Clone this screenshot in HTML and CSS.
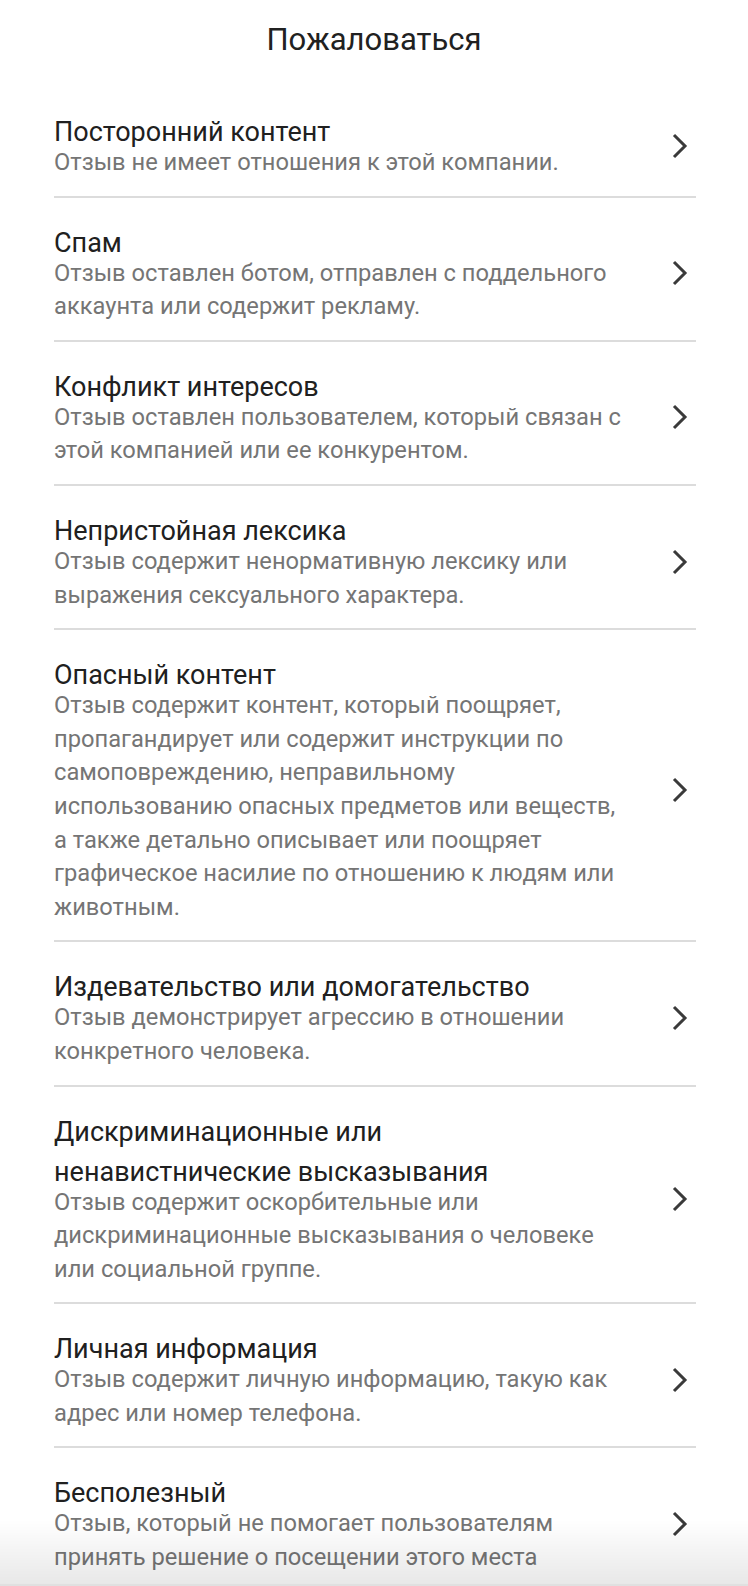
FILE: index.html
```html
<!DOCTYPE html>
<html lang="ru">
<head>
  <meta charset="UTF-8">
  <title>Пожаловаться</title>
  <link rel="stylesheet" href="styles.css">
</head>
<body>
  <div class="header">Пожаловаться</div>

  <div class="report-list">
    <div class="report-item">
      <div class="report-text">
        <div class="report-title">Посторонний контент</div>
        <div class="report-desc">Отзыв не имеет отношения к этой компании.</div>
      </div>
      <svg class="chevron" viewBox="0 0 16 26"><path d="M2 2 L13 13 L2 24"/></svg>
    </div>

    <div class="report-item">
      <div class="report-text">
        <div class="report-title">Спам</div>
        <div class="report-desc">Отзыв оставлен ботом, отправлен с поддельного аккаунта или содержит рекламу.</div>
      </div>
      <svg class="chevron" viewBox="0 0 16 26"><path d="M2 2 L13 13 L2 24"/></svg>
    </div>

    <div class="report-item">
      <div class="report-text">
        <div class="report-title">Конфликт интересов</div>
        <div class="report-desc">Отзыв оставлен пользователем, который связан с этой компанией или ее конкурентом.</div>
      </div>
      <svg class="chevron" viewBox="0 0 16 26"><path d="M2 2 L13 13 L2 24"/></svg>
    </div>

    <div class="report-item">
      <div class="report-text">
        <div class="report-title">Непристойная лексика</div>
        <div class="report-desc">Отзыв содержит ненормативную лексику или выражения сексуального характера.</div>
      </div>
      <svg class="chevron" viewBox="0 0 16 26"><path d="M2 2 L13 13 L2 24"/></svg>
    </div>

    <div class="report-item">
      <div class="report-text">
        <div class="report-title">Опасный контент</div>
        <div class="report-desc">Отзыв содержит контент, который поощряет, пропагандирует или содержит инструкции по самоповреждению, неправильному использованию опасных предметов или веществ, а также детально описывает или поощряет графическое насилие по отношению к людям или животным.</div>
      </div>
      <svg class="chevron" viewBox="0 0 16 26"><path d="M2 2 L13 13 L2 24"/></svg>
    </div>

    <div class="report-item">
      <div class="report-text">
        <div class="report-title">Издевательство или домогательство</div>
        <div class="report-desc">Отзыв демонстрирует агрессию в отношении конкретного человека.</div>
      </div>
      <svg class="chevron" viewBox="0 0 16 26"><path d="M2 2 L13 13 L2 24"/></svg>
    </div>

    <div class="report-item">
      <div class="report-text">
        <div class="report-title">Дискриминационные или ненавистнические высказывания</div>
        <div class="report-desc">Отзыв содержит оскорбительные или дискриминационные высказывания о человеке или социальной группе.</div>
      </div>
      <svg class="chevron" viewBox="0 0 16 26"><path d="M2 2 L13 13 L2 24"/></svg>
    </div>

    <div class="report-item">
      <div class="report-text">
        <div class="report-title">Личная информация</div>
        <div class="report-desc">Отзыв содержит личную информацию, такую как адрес или номер телефона.</div>
      </div>
      <svg class="chevron" viewBox="0 0 16 26"><path d="M2 2 L13 13 L2 24"/></svg>
    </div>

    <div class="report-item">
      <div class="report-text">
        <div class="report-title">Бесполезный</div>
        <div class="report-desc">Отзыв, который не помогает пользователям принять решение о посещении этого места</div>
      </div>
      <svg class="chevron" viewBox="0 0 16 26"><path d="M2 2 L13 13 L2 24"/></svg>
    </div>
  </div>

  <div class="bottom-shade"></div>
</body>
</html>
```

FILE: styles.css
```css
body {
  font-family: Roboto, "Noto Sans", sans-serif;
  background-color: white;
  margin: 0;
  padding: 0;
}

.header {
  height: 80px;
  line-height: 80px;
  margin-bottom: 7px;
  text-align: center;
  font-size: 31px;
  color: #212121;
}

.report-list {
  margin: 0 52px 0 54px;
}

.report-item {
  display: flex;
  align-items: center;
  padding: 25px 0 16px;
  border-bottom: 2px solid #dcdcdc;
}

.report-text {
  width: 571px;
}

.report-title {
  font-size: 27px;
  line-height: 40px;
  margin-right: 8px;
  margin-bottom: -6px;
  color: #202020;
}

.report-desc {
  font-size: 23.7px;
  line-height: 33.6px;
  color: #757575;
}

.chevron {
  width: 16px;
  height: 26px;
  margin-left: auto;
  margin-right: 8px;
  fill: none;
  stroke: #3a3a3a;
  stroke-width: 3;
}

.bottom-shade {
  position: fixed;
  left: 0;
  right: 0;
  bottom: 0;
  height: 64px;
  background: linear-gradient(rgba(0,0,0,0), rgba(0,0,0,0.09));
  border-bottom: 2px solid rgba(0,0,0,0.12);
  pointer-events: none;
}
```
